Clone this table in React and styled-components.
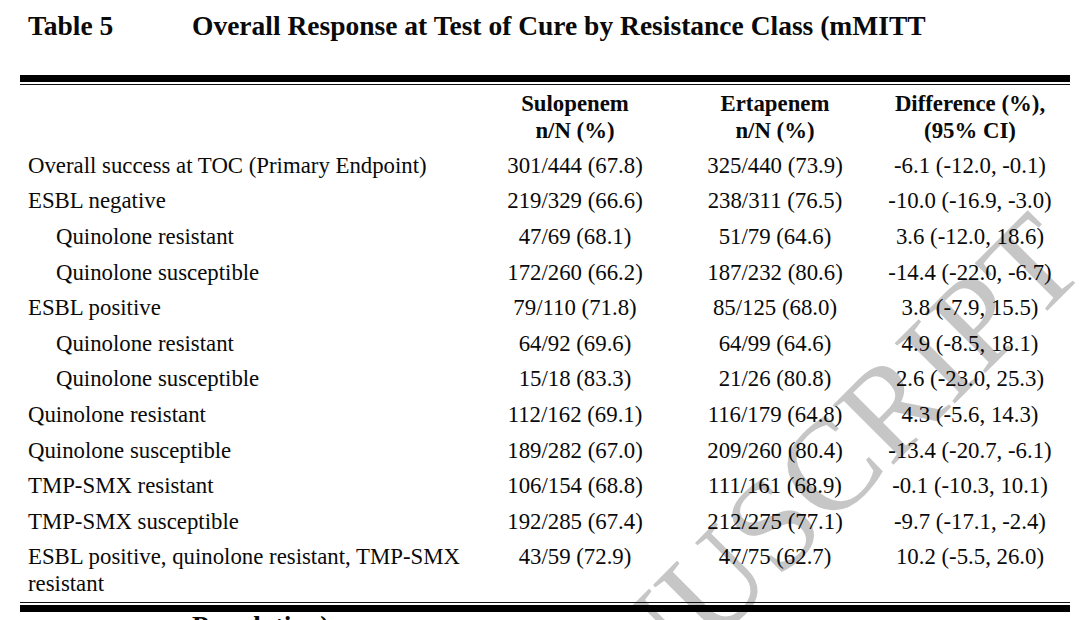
import React from 'react';
import styled, { createGlobalStyle } from 'styled-components';

const rows = [
  { label: 'Overall success at TOC (Primary Endpoint)', sul: '301/444 (67.8)', ert: '325/440 (73.9)', diff: '-6.1 (-12.0, -0.1)' },
  { label: 'ESBL negative', sul: '219/329 (66.6)', ert: '238/311 (76.5)', diff: '-10.0 (-16.9, -3.0)' },
  { label: 'Quinolone resistant', sub: true, sul: '47/69 (68.1)', ert: '51/79 (64.6)', diff: '3.6 (-12.0, 18.6)' },
  { label: 'Quinolone susceptible', sub: true, sul: '172/260 (66.2)', ert: '187/232 (80.6)', diff: '-14.4 (-22.0, -6.7)' },
  { label: 'ESBL positive', sul: '79/110 (71.8)', ert: '85/125 (68.0)', diff: '3.8 (-7.9, 15.5)' },
  { label: 'Quinolone resistant', sub: true, sul: '64/92 (69.6)', ert: '64/99 (64.6)', diff: '4.9 (-8.5, 18.1)' },
  { label: 'Quinolone susceptible', sub: true, sul: '15/18 (83.3)', ert: '21/26 (80.8)', diff: '2.6 (-23.0, 25.3)' },
  { label: 'Quinolone resistant', sul: '112/162 (69.1)', ert: '116/179 (64.8)', diff: '4.3 (-5.6, 14.3)' },
  { label: 'Quinolone susceptible', sul: '189/282 (67.0)', ert: '209/260 (80.4)', diff: '-13.4 (-20.7, -6.1)' },
  { label: 'TMP-SMX resistant', sul: '106/154 (68.8)', ert: '111/161 (68.9)', diff: '-0.1 (-10.3, 10.1)' },
  { label: 'TMP-SMX susceptible', sul: '192/285 (67.4)', ert: '212/275 (77.1)', diff: '-9.7 (-17.1, -2.4)' },
  { label: 'ESBL positive, quinolone resistant, TMP-SMX resistant', sul: '43/59 (72.9)', ert: '47/75 (62.7)', diff: '10.2 (-5.5, 26.0)' },
];

const App = () => {
  return (
    <Page>
      <GlobalStyle />
      <Watermark>MANUSCRIPT</Watermark>
      <TitleRow>
        <TableNo>Table 5</TableNo>
        <Title>Overall Response at Test of Cure by Resistance Class (mMITT</Title>
      </TitleRow>
      <TableBox>
        <Rule />
        <Grid>
          <HeadCell />
          <HeadCell>Sulopenem<br />n/N (%)</HeadCell>
          <HeadCell>Ertapenem<br />n/N (%)</HeadCell>
          <HeadCell>Difference (%),<br />(95% CI)</HeadCell>
          {rows.map((r, i) => (
            <React.Fragment key={i}>
              <LabelCell $sub={r.sub}>{r.label}</LabelCell>
              <ValueCell>{r.sul}</ValueCell>
              <ValueCell>{r.ert}</ValueCell>
              <ValueCell>{r.diff}</ValueCell>
            </React.Fragment>
          ))}
        </Grid>
        <Rule $bottom />
      </TableBox>
      <NextTitle>Population)</NextTitle>
    </Page>
  );
};

export default App;

const GlobalStyle = createGlobalStyle`
  html, body {
    margin: 0;
    padding: 0;
    background: #ffffff;
  }
  body {
    font-family: "Liberation Serif", "Times New Roman", serif;
    color: #0a0a0a;
  }
`;

const Page = styled.div`
  position: relative;
  width: 1080px;
  height: 620px;
  overflow: hidden;
  background: #ffffff;
`;

const Watermark = styled.div`
  position: absolute;
  left: 762px;
  top: 534px;
  transform: translate(-50%, -50%) rotate(-45deg);
  font-size: 130px;
  line-height: 1;
  color: #c6c6c6;
  white-space: nowrap;
  pointer-events: none;
  z-index: 0;
`;

const TitleRow = styled.div`
  position: relative;
  z-index: 1;
  display: flex;
  padding: 10px 0 0 28px;
  font-size: 27.5px;
  line-height: 31px;
  font-weight: 700;
`;

const TableNo = styled.div`
  width: 164px;
  flex-shrink: 0;
`;

const Title = styled.div`
  white-space: nowrap;
`;

const TableBox = styled.div`
  position: relative;
  z-index: 1;
  width: 1050px;
  margin: 34px 0 0 20px;
`;

const Rule = styled.div`
  height: 2px;
  border-top: ${p => (p.$bottom ? '1.5px solid #111' : '7px solid #000')};
  border-bottom: ${p => (p.$bottom ? '7px solid #000' : '1.5px solid #111')};
  box-sizing: content-box;
`;

const Grid = styled.div`
  display: grid;
  grid-template-columns: 460px 190px 210px 180px;
  font-size: 22.8px;
  line-height: 27px;
`;

const HeadCell = styled.div`
  padding: 4.5px 0 4px;
  text-align: center;
  font-weight: 700;
`;

const LabelCell = styled.div`
  padding: 4.3px 0 4.3px ${p => (p.$sub ? '36px' : '8px')};
  max-width: 440px;
`;

const ValueCell = styled.div`
  padding: 4.3px 0;
  text-align: center;
  white-space: nowrap;
`;

const NextTitle = styled.div`
  position: relative;
  z-index: 1;
  padding-left: 192px;
  margin-top: 4px;
  font-size: 27.5px;
  line-height: 20px;
  font-weight: 700;
`;
